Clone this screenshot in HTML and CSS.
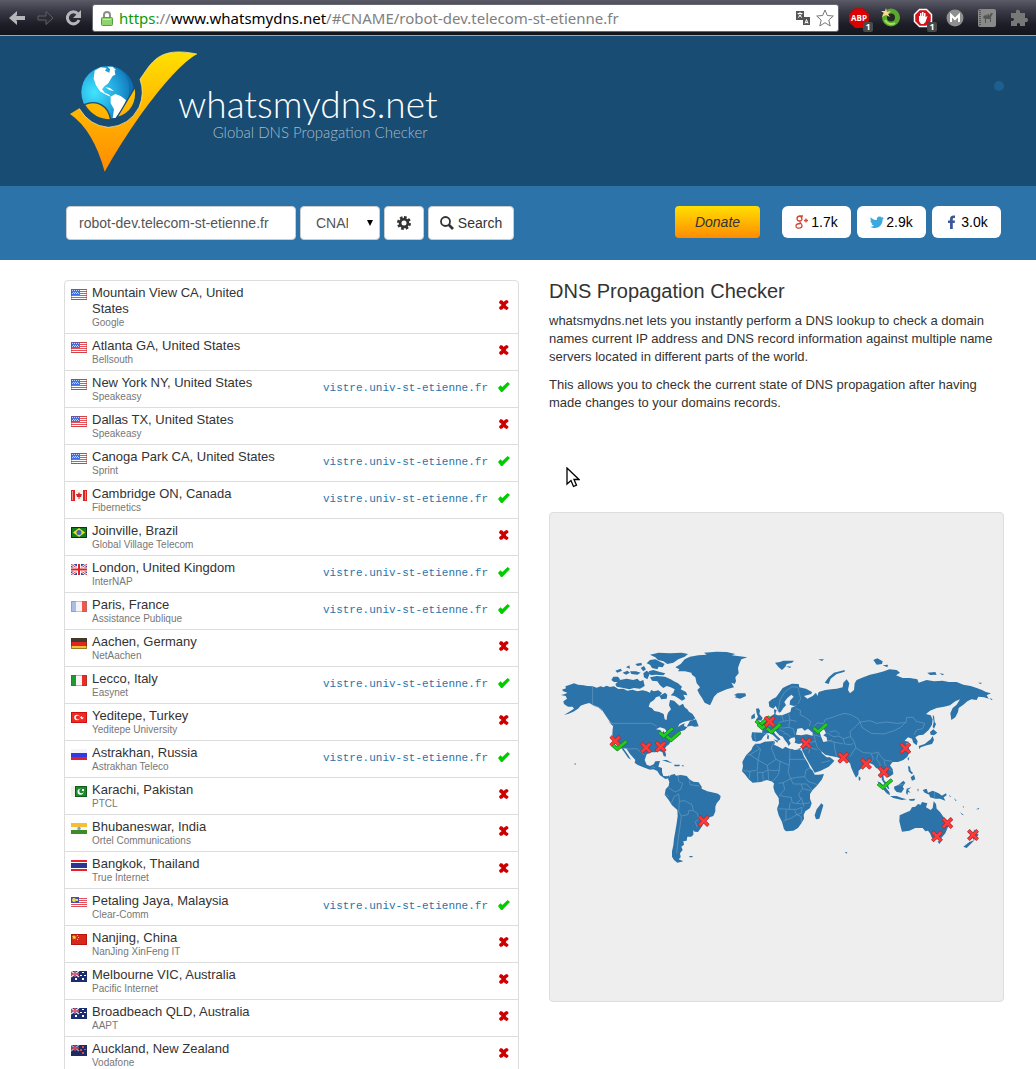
FILE: index.html
```html
<!DOCTYPE html>
<html lang="en">
<head>
<meta charset="utf-8">
<title>whatsmydns.net - Global DNS Propagation Checker</title>
<link rel="stylesheet" href="styles.css">
</head>
<body>
<svg class="sprite" aria-hidden="true">
  <defs>
    <symbol id="ok" viewBox="0 0 36 30"><path d="M0 18 7 10 13 15 29 0 36 6 13 30 9 30Z"/></symbol>
    <symbol id="no" viewBox="0 0 36 30"><path d="M3 6 8 0 14 2 17 6 21 2 26 0 31 3 31 8 26 11 23 15 26 19 31 22 31 26 26 30 21 28 17 24 14 28 8 30 3 25 4 21 11 15 4 10Z"/></symbol>
    <symbol id="us" viewBox="0 0 16 11"><path fill="#fff" d="M0 0h16v11H0z"/><path stroke="#e8505a" d="M0 .5h16M0 2.500h16M0 4.500h16M0 6.500h16M0 8.500h16M0 10.500h16"/><path fill="#3f6fe0" d="M0 0h9v6H0z"/><path stroke="#c3d3ff" stroke-dasharray="1 1" d="M1 1.500h7M2 3.500h6M1 4.500h7"/><path fill="none" stroke="#a33" stroke-opacity=".45" d="M.5 .5h15v10H.5z"/></symbol>
    <symbol id="ca" viewBox="0 0 16 11"><path fill="#f4f4f4" d="M0 0h16v11H0z"/><path fill="#d22" d="M0 0h4v11H0zM12 0h4v11h-4zM8 2l1 2 2 0-1 3H8.500v2h-1V7H6L5 4l2 0z"/><path stroke="#fff" stroke-opacity=".5" d="M1.500 1v9M14.500 1v9"/></symbol>
    <symbol id="br" viewBox="0 0 16 11"><path fill="#14801c" d="M0 0h16v11H0z"/><path fill="#f2df2a" d="M8 1l6 4.500-6 4.500-6-4.500z"/><circle cx="8" cy="5.500" r="2.500" fill="#3a66c8"/><path fill="none" stroke="#04380a" d="M.5 .5h15v10H.5z"/></symbol>
    <symbol id="gb" viewBox="0 0 16 11"><path fill="#2f4a9c" d="M0 0h16v11H0z"/><path stroke="#fff" stroke-width="2.500" d="M0 0l16 11M16 0L0 11"/><path stroke="#d33" d="M0 0l16 11M16 0L0 11"/><path stroke="#fff" stroke-width="4" d="M8 0v11M0 5.500h16"/><path stroke="#e0222c" stroke-width="2" d="M8 0v11M0 5.500h16"/></symbol>
    <symbol id="fr" viewBox="0 0 16 11"><path fill="#f5f5f8" d="M0 0h16v11H0z"/><path fill="#a9bde6" d="M0 0h5v11H0z"/><path fill="#f0584c" d="M11 0h5v11h-5z"/><path fill="none" stroke="#777" stroke-opacity=".4" d="M.5 .5h15v10H.5z"/></symbol>
    <symbol id="de" viewBox="0 0 16 11"><path fill="#3b3b36" d="M0 0h16v4H0z"/><path fill="#e3261c" d="M0 4h16v4H0z"/><path fill="#f0c43a" d="M0 8h16v3H0z"/><path fill="none" stroke="#4a3010" stroke-opacity=".5" d="M.5 .5h15v10H.5z"/></symbol>
    <symbol id="it" viewBox="0 0 16 11"><path fill="#f5f5f5" d="M0 0h16v11H0z"/><path fill="#1f9a30" d="M0 0h5v11H0z"/><path fill="#ec2b24" d="M11 0h5v11h-5z"/><path fill="none" stroke="#444" stroke-opacity=".35" d="M.5 .5h15v10H.5z"/></symbol>
    <symbol id="tr" viewBox="0 0 16 11"><path fill="#ee2a24" d="M0 0h16v11H0z"/><circle cx="6" cy="5.500" r="2.800" fill="#fff"/><circle cx="7" cy="5.500" r="2.100" fill="#ee2a24"/><path fill="#fff" d="M10.500 4l1 1.500 1.500 0-2 2-2-2z"/><path fill="none" stroke="#b00" stroke-opacity=".6" d="M.5 .5h15v10H.5z"/></symbol>
    <symbol id="ru" viewBox="0 0 16 11"><path fill="#f3f3f8" d="M0 0h16v4H0z"/><path fill="#3038e8" d="M0 4h16v4H0z"/><path fill="#e0202a" d="M0 8h16v3H0z"/></symbol>
    <symbol id="pk" viewBox="0 0 16 11"><path fill="#eef2ee" d="M0 0h4v11H0z"/><path fill="#1d8a2c" d="M4 0h12v11H4z"/><circle cx="9.500" cy="5.800" r="3" fill="#fff"/><circle cx="10.500" cy="5" r="2.300" fill="#1d8a2c"/><path fill="#fff" d="M11 3h2v2h-2z"/><path fill="none" stroke="#053a0c" stroke-opacity=".6" d="M4.500 .5h11v10h-11z"/></symbol>
    <symbol id="in" viewBox="0 0 16 11"><path fill="#f3c034" d="M0 0h16v4H0z"/><path fill="#f7f7f7" d="M0 4h16v3H0z"/><path fill="#3c8c28" d="M0 7h16v4H0z"/><circle cx="8" cy="5.500" r="1.700" fill="#8a9cc8"/></symbol>
    <symbol id="th" viewBox="0 0 16 11"><path fill="#e8202a" d="M0 0h16v11H0z"/><path fill="#fff" d="M0 2h16v7H0z"/><path fill="#2c3494" d="M0 3h16v5H0z"/></symbol>
    <symbol id="my" viewBox="0 0 16 11"><path fill="#fff" d="M0 0h16v11H0z"/><path stroke="#e0505a" d="M0 1.500h16M0 3.500h16M0 5.500h16M0 7.500h16M0 9.500h16"/><path fill="#4450b4" d="M0 0h8v6H0z"/><circle cx="3" cy="3" r="2" fill="#f0dc50"/><path fill="#f0dc50" d="M5 2h2v2H5z"/></symbol>
    <symbol id="cn" viewBox="0 0 16 11"><path fill="#d8281c" d="M0 0h16v11H0z"/><path fill="#f6c832" d="M3 1l1 1.500 1.500 0-1 1.500 0 1.500L3 4.500 1.500 5l.5-1.500L1 2h1.500zM6 1h1v1H6zM7 3h1v1H7zM6 5h1v1H6z"/><path fill="none" stroke="#900" stroke-opacity=".5" d="M.5 .5h15v10H.5z"/></symbol>
    <symbol id="au" viewBox="0 0 16 11"><path fill="#1c2c70" d="M0 0h16v11H0z"/><path stroke="#dcdcf0" stroke-width="1.500" d="M0 0l8 6M8 0L0 6"/><path stroke="#e25a66" stroke-width="1.500" d="M4 0v6M0 3h8"/><path fill="#fff" d="M4 7h2v2H4zM11 1h2v1h-2zM13 4h2v1h-2zM9 4h2v1H9zM11 7h2v2h-2z"/></symbol>
    <symbol id="nz" viewBox="0 0 16 11"><path fill="#1e2a60" d="M0 0h16v11H0z"/><path stroke="#9aa2cc" stroke-width="1.500" d="M0 0l8 6M8 0L0 6"/><path stroke="#cc4452" stroke-width="1.500" d="M4 0v6M0 3h8"/><path fill="#d84a54" d="M11 1h2v2h-2zM13 4h2v1h-2zM9 4h2v2H9zM11 7h2v2h-2z"/></symbol>
    <symbol id="pin-no" viewBox="-18 -18 36 36"><path fill="none" stroke="#a8282c" stroke-width="11" d="M-14-14 14 14M14-14-14 14"/><path fill="none" stroke="#ff3a3a" stroke-width="8" d="M-13-13 13 13M13-13-13 13"/></symbol>
    <symbol id="pin-ok" viewBox="-24 -18 48 36"><path fill="none" stroke="#178018" stroke-width="11" d="M-21-2-7 10 21-14"/><path fill="none" stroke="#22cc22" stroke-width="8" d="M-20-1-7 10 20-13"/></symbol>
  </defs>
</svg>

<nav class="chrome" aria-label="Browser toolbar">
  <button class="tool" aria-label="Back"><svg viewBox="0 0 18 18"><path fill="#b4b6b9" d="M9 2v4L8 7h9v4H8l1 1v4L1 9z"/></svg></button>
  <button class="tool" aria-label="Forward"><svg viewBox="0 0 18 18"><path fill="#2b2d35" stroke="#5d6068" d="M10 2.500V7H2v4h8v4.500L17 9z"/></svg></button>
  <button class="tool" aria-label="Reload"><svg viewBox="0 0 18 18"><path fill="none" stroke="#b4b6b9" stroke-width="3" d="M14 5a6 6 0 1 0 1 6"/><path fill="#b4b6b9" d="M17 1v8H9z"/></svg></button>
  <div class="address">
    <svg class="lock" viewBox="0 0 12 16"><path fill="none" stroke="#8b8f8b" stroke-width="2" d="M3 8V5a3 3 0 0 1 6 0v3"/><rect x=".5" y="7.500" width="11" height="8" rx="1" fill="#8fd36c" stroke="#5b9b43"/><path stroke="#c4ecac" d="M2 9.500h8"/></svg>
    <span class="url"><span class="scheme">https</span>://<span class="host">www.whatsmydns.net</span>/#CNAME/robot-dev.telecom-st-etienne.fr</span>
    <svg class="translate" viewBox="0 0 14 14"><path fill="#555" d="M0 0h8v9H0zM7 6h7v8H7z"/><path fill="none" stroke="#fff" d="M1.500 2.500h5M4 1v1M2 6.500l3.500-3M2.500 3.500l3.500 3M9 12.500l1.500-4 1.500 4M9.500 11.500h2"/></svg>
    <svg class="star" viewBox="0 0 18 18"><path fill="#fff" stroke="#777" d="M9 1l2.300 5.500 6 .5-4.500 4 1.400 6L9 13.700 3.800 17l1.400-6L.7 7l6-.5z"/></svg>
  </div>
  <div class="extensions">
    <button class="ext" aria-label="Adblock Plus"><svg viewBox="0 0 20 20"><path fill="#d00" stroke="#a11" d="M6 .5h8L19.500 6v8L14 19.500H6L.5 14V6z"/></svg><b class="abp">ABP</b><span class="count">1</span></button>
    <button class="ext" aria-label="Green orb"><svg viewBox="0 0 20 20"><circle cx="10" cy="9.500" r="6.500" fill="#222b22" stroke="#5aa82c" stroke-width="5"/><path fill="none" stroke="#a4e05a" stroke-width="2" d="M4 12a7 7 0 0 0 10 3"/><path fill="#ffd890" d="M5 0l1 4 4-1-3 3 2 3-4-2-4 2 2-4-3-2h4z"/></svg></button>
    <button class="ext" aria-label="AdBlock"><svg viewBox="0 0 20 20"><path fill="#d3121c" stroke="#fff" stroke-width="1.500" d="M6.500 1.500h7l5 5v7l-5 5h-7l-5-5v-7z"/><path fill="#fff" d="M6 8h1V5h1.500v3H9V4h1.500v4h.5V5h1.500v4l2-1-2 6-2 2H8l-2-3z"/></svg><span class="count">1</span></button>
    <button class="ext" aria-label="Mail"><svg viewBox="0 0 20 20"><circle cx="10" cy="10" r="8.500" fill="#8f8f8f"/><path fill="none" stroke="#fff" stroke-width="2" d="M6 14V7l4 4 4-4v7"/></svg></button>
    <button class="ext" aria-label="Perldoc"><svg viewBox="0 0 20 20"><rect x="1" y="1" width="18" height="18" rx="2" fill="#8a8a8a"/><path stroke="#555" stroke-width="2" stroke-dasharray="1 1" d="M3 2v16"/><path fill="#555" d="M6 10q1-4 2-2 1-3 2 0l1-2q1-1 1 2l2-3h2l-2 4v5h-1v-3h-4v4H8v-4z"/></svg></button>
    <button class="ext" aria-label="Extensions"><svg viewBox="0 0 20 20"><path fill="#777" d="M2 5h5V3q1-3 4 0v2h5v5h2q2 2 0 4h-2v4h-5v-2q-2-2-3 0v2H2v-5h2q2-2 0-3H2z"/></svg></button>
  </div>
</nav>

<div class="page">
  <header class="masthead">
    <a class="brand" href="#">
      <svg class="logo" viewBox="0 0 420 435" aria-hidden="true">
        <defs>
          <linearGradient id="gold" gradientUnits="userSpaceOnUse" x1="0" y1="35" x2="0" y2="395"><stop offset="0" stop-color="#ffe000"/><stop offset="1" stop-color="#ff8a00"/></linearGradient>
          <radialGradient id="sea" cx=".25" cy=".5" r=".75"><stop offset="0" stop-color="#42e4ff"/><stop offset=".6" stop-color="#20a4dc"/><stop offset="1" stop-color="#1070b4"/></radialGradient>
        </defs>
        <circle cx="143" cy="157" r="79" fill="url(#sea)"/>
        <path fill="#0e68ac" opacity=".6" d="M170 83q55 30 30 110l-20 35q42-25 42-75-4-50-52-70z"/>
        <path fill="#fff" d="M104 92 122 82 140 84 135 92 148 98 150 88 164 92 166 104 158 108 152 118 145 130 134 138 126 148 134 158 148 164 152 170 138 164 120 154 108 136 101 116ZM142 80 158 80 168 90 158 94ZM136 142 150 144 162 154 148 150ZM152 170 166 162 182 168 198 180 192 200 178 218 166 234 158 234 162 208 152 190Z"/>
        <path fill="url(#gold)" stroke="#184c72" stroke-width="4" d="M73 194C110 178 146 196 152 240 120 240 92 226 73 194ZM170 234 226 140Q236 214 170 234Z"/>
        <path fill="url(#gold)" d="M30 222 58 205Q88 257 145 262 208 258 237 202 255 160 240 118C276 66 296 18 411 42Q350 76 242 224 180 312 134 395 100 270 30 222Z"/>
        <path fill="none" stroke="#fff3b0" stroke-width="2" d="M58 206Q88 257 145 262 208 258 237 202 255 160 240 118C276 66 296 18 411 42"/>
      </svg>
      <span class="words"><span class="name">whatsmydns.net</span><span class="tagline">Global DNS Propagation Checker</span></span>
    </a>
    <span class="dot"></span>
  </header>

  <div class="bar">
    <form class="lookup">
      <input class="field domain" type="text" aria-label="Domain name" value="robot-dev.telecom-st-etienne.fr">
      <span class="pick"><select class="field type" aria-label="Record type"><option>CNAME</option><option>A</option><option>MX</option></select></span>
      <button class="field gear" type="button" aria-label="Settings"><svg viewBox="0 0 14 14"><path fill="none" stroke="#333" stroke-width="3" stroke-dasharray="2.500 1.820" d="M7 1.500a5.500 5.500 0 1 1-.01 0"/><circle cx="7" cy="7" r="3.900" fill="none" stroke="#333" stroke-width="2.800"/></svg></button>
      <button class="field search" type="button"><svg viewBox="0 0 14 14"><circle cx="5.500" cy="5.500" r="4.500" fill="none" stroke="#333" stroke-width="1.800"/><path stroke="#333" stroke-width="2.600" d="M8.500 8.500l4.500 4.500"/></svg>Search</button>
    </form>
    <div class="social">
      <button class="donate" type="button">Donate</button>
      <a class="share" href="#"><svg viewBox="0 0 14 14"><path fill="none" stroke="#d0483c" stroke-width="1.300" d="M8 1H4.500C1 1.500 1.500 6 4.500 6 8 6 7.500 1.500 4.500 1M5 6c-1 2 2 2 2 4.500C7 14 1 14 1 11c0-2 2-2.500 4.500-2.500M9 5.500h4M11 3.500v4"/></svg>1.7k</a>
      <a class="share" href="#"><svg viewBox="0 0 14 14"><path fill="#3ba9e0" d="M14 3l-1.400 1.500C12.500 10 9 13 5 13c-2 0-3.500-.4-5-1.300 1.500.1 3-.3 4-1.200-1.200 0-2.200-.8-2.600-2h1.200C1.200 8.100.4 7 .4 5.600l1.200.4C.4 5 .1 3.500.8 2.200 2.200 4 4.300 5 6.800 5.100 6.300 3 7.800 1.500 9.600 1.500c.8 0 1.600.3 2.100.9l1.800-.7-1.200 1.600z"/></svg>2.9k</a>
      <a class="share" href="#"><svg viewBox="0 0 14 14"><path fill="#3b5998" d="M5 14V8H3V5.500h2V4q0-3.500 3.500-3.500H10V3H9Q7.800 3 7.800 4v1.500H10L9.700 8H7.800v6z"/></svg>3.0k</a>
    </div>
  </div>

  <main class="content">
    <table class="results">
      <colgroup><col class="c-flag"><col class="c-place"><col><col class="c-state"></colgroup>
      <tbody>
        <tr><td class="flag"><svg><use href="#us"/></svg></td><td>Mountain View CA, United States<small>Google</small></td><td class="value"></td><td class="state no"><svg><use href="#no"/></svg></td></tr>
        <tr><td class="flag"><svg><use href="#us"/></svg></td><td>Atlanta GA, United States<small>Bellsouth</small></td><td class="value"></td><td class="state no"><svg><use href="#no"/></svg></td></tr>
        <tr><td class="flag"><svg><use href="#us"/></svg></td><td>New York NY, United States<small>Speakeasy</small></td><td class="value">vistre.univ-st-etienne.fr</td><td class="state ok"><svg><use href="#ok"/></svg></td></tr>
        <tr><td class="flag"><svg><use href="#us"/></svg></td><td>Dallas TX, United States<small>Speakeasy</small></td><td class="value"></td><td class="state no"><svg><use href="#no"/></svg></td></tr>
        <tr><td class="flag"><svg><use href="#us"/></svg></td><td>Canoga Park CA, United States<small>Sprint</small></td><td class="value">vistre.univ-st-etienne.fr</td><td class="state ok"><svg><use href="#ok"/></svg></td></tr>
        <tr><td class="flag"><svg><use href="#ca"/></svg></td><td>Cambridge ON, Canada<small>Fibernetics</small></td><td class="value">vistre.univ-st-etienne.fr</td><td class="state ok"><svg><use href="#ok"/></svg></td></tr>
        <tr><td class="flag"><svg><use href="#br"/></svg></td><td>Joinville, Brazil<small>Global Village Telecom</small></td><td class="value"></td><td class="state no"><svg><use href="#no"/></svg></td></tr>
        <tr><td class="flag"><svg><use href="#gb"/></svg></td><td>London, United Kingdom<small>InterNAP</small></td><td class="value">vistre.univ-st-etienne.fr</td><td class="state ok"><svg><use href="#ok"/></svg></td></tr>
        <tr><td class="flag"><svg><use href="#fr"/></svg></td><td>Paris, France<small>Assistance Publique</small></td><td class="value">vistre.univ-st-etienne.fr</td><td class="state ok"><svg><use href="#ok"/></svg></td></tr>
        <tr><td class="flag"><svg><use href="#de"/></svg></td><td>Aachen, Germany<small>NetAachen</small></td><td class="value"></td><td class="state no"><svg><use href="#no"/></svg></td></tr>
        <tr><td class="flag"><svg><use href="#it"/></svg></td><td>Lecco, Italy<small>Easynet</small></td><td class="value">vistre.univ-st-etienne.fr</td><td class="state ok"><svg><use href="#ok"/></svg></td></tr>
        <tr><td class="flag"><svg><use href="#tr"/></svg></td><td>Yeditepe, Turkey<small>Yeditepe University</small></td><td class="value"></td><td class="state no"><svg><use href="#no"/></svg></td></tr>
        <tr><td class="flag"><svg><use href="#ru"/></svg></td><td>Astrakhan, Russia<small>Astrakhan Teleco</small></td><td class="value">vistre.univ-st-etienne.fr</td><td class="state ok"><svg><use href="#ok"/></svg></td></tr>
        <tr><td class="flag"><svg><use href="#pk"/></svg></td><td>Karachi, Pakistan<small>PTCL</small></td><td class="value"></td><td class="state no"><svg><use href="#no"/></svg></td></tr>
        <tr><td class="flag"><svg><use href="#in"/></svg></td><td>Bhubaneswar, India<small>Ortel Communications</small></td><td class="value"></td><td class="state no"><svg><use href="#no"/></svg></td></tr>
        <tr><td class="flag"><svg><use href="#th"/></svg></td><td>Bangkok, Thailand<small>True Internet</small></td><td class="value"></td><td class="state no"><svg><use href="#no"/></svg></td></tr>
        <tr><td class="flag"><svg><use href="#my"/></svg></td><td>Petaling Jaya, Malaysia<small>Clear-Comm</small></td><td class="value">vistre.univ-st-etienne.fr</td><td class="state ok"><svg><use href="#ok"/></svg></td></tr>
        <tr><td class="flag"><svg><use href="#cn"/></svg></td><td>Nanjing, China<small>NanJing XinFeng IT</small></td><td class="value"></td><td class="state no"><svg><use href="#no"/></svg></td></tr>
        <tr><td class="flag"><svg><use href="#au"/></svg></td><td>Melbourne VIC, Australia<small>Pacific Internet</small></td><td class="value"></td><td class="state no"><svg><use href="#no"/></svg></td></tr>
        <tr><td class="flag"><svg><use href="#au"/></svg></td><td>Broadbeach QLD, Australia<small>AAPT</small></td><td class="value"></td><td class="state no"><svg><use href="#no"/></svg></td></tr>
        <tr><td class="flag"><svg><use href="#nz"/></svg></td><td>Auckland, New Zealand<small>Vodafone</small></td><td class="value"></td><td class="state no"><svg><use href="#no"/></svg></td></tr>
      </tbody>
    </table>

    <section class="about">
      <h1>DNS Propagation Checker</h1>
      <p>whatsmydns.net lets you instantly perform a DNS lookup to check a domain names current IP address and DNS record information against multiple name servers located in different parts of the world.</p>
      <p>This allows you to check the current state of DNS propagation after having made changes to your domains records.</p>
      <div class="gap"><svg class="cursor" viewBox="0 0 14 22"><path fill="#fff" stroke="#000" stroke-width="1.300" d="M1 1v16l4-3.500 2.500 6 3-1.300L8 12.500h5z"/></svg></div>
      <div class="map">
        <svg viewBox="0 -381 1359 1464" role="img" aria-label="World map of DNS servers">
          <g class="land">
            <!-- North America -->
            <path d="M33 165 45 162 52 158 40 154 36 149 48 145 46 139 60 134 72 130 84 134 100 136 112 138 128 139 140 143 152 139 160 142 170 137 180 141 192 139 205 147 220 146 232 152 248 149 262 154 278 151 290 154 300 158 303 150 312 154 325 151 336 159 329 168 318 172 312 180 300 188 296 200 306 205 313 213 328 216 341 222 344 238 350 240 351 228 354 218 363 208 357 196 360 180 372 182 380 190 388 197 399 191 404 202 412 208 417 215 427 221 436 235 428 241 414 242 400 246 388 252 384 261 394 254 404 250 402 258 412 262 404 270 392 274 386 282 376 290 370 298 362 304 358 312 348 320 343 330 348 342 347 350 341 348 337 336 326 333 316 337 305 337 290 343 284 360 290 374 300 378 311 373 316 364 330 363 325 380 336 384 336 396 340 408 352 409 358 406 358 414 346 417 338 411 330 406 322 393 310 388 300 389 280 382 262 374 254 368 256 360 240 342 228 324 220 325 234 344 243 359 234 353 224 338 212 322 201 312 193 298 187 284 188 268 190 253 180 245 172 234 164 222 156 210 146 202 128 195 118 189 106 192 92 197 84 206 70 215 56 221 42 225 58 215 72 206 68 200 54 200 42 192 40 184 51 176 47 168Z"/>
            <path d="M420 243 438 238 446 259 434 260 424 257 410 260ZM175 243 192 254 188 258Z"/>
            <path class="water" d="M318 268 330 262 344 266 352 276 346 282 340 272 334 286 328 284 332 270Z"/>
            <!-- Arctic islands -->
            <path d="M184 120 190 110 204 110 210 118 206 126 192 126ZM196 132 210 120 230 116 250 120 262 116 270 124 280 120 284 138 270 146 252 144 238 148 220 144 200 140ZM196 92 212 86 216 92 202 98ZM218 98 232 92 240 98 228 104ZM240 94 258 94 272 98 262 104 244 102ZM228 82 238 76 240 86ZM256 72 274 68 276 76 262 78ZM272 84 282 78 288 88 280 94ZM280 100 290 92 300 100 292 118 282 112ZM290 70 300 60 316 58 332 66 344 72 338 82 326 80 322 88 306 84 300 74ZM296 94 310 90 330 96 346 100 340 106 318 104 302 106ZM300 44 326 38 360 40 395 38 414 42 404 50 385 58 370 68 352 72 340 64 324 60 316 52ZM300 112 320 108 345 110 362 118 372 124 384 130 396 140 392 148 408 156 412 166 400 164 406 176 396 182 384 174 374 168 362 166 370 158 374 148 362 142 350 138 340 144 330 136 322 124 306 122ZM328 168 345 158 352 164 350 176 334 178Z"/>
            <!-- Greenland, Iceland -->
            <path d="M376 82 392 72 404 58 420 50 445 46 470 44 462 38 500 35 530 36 556 42 545 46 592 52 574 58 568 72 564 84 566 100 556 112 558 124 554 132 544 128 552 142 530 148 516 154 502 160 492 170 486 184 480 196 464 188 456 174 448 162 442 150 450 142 440 130 436 112 426 104 424 98 405 94 384 94 388 88ZM552 165 562 160 586 160 588 168 570 176 554 172 560 168Z"/>
            <!-- Caribbean, Pacific dots -->
            <path d="M336 360 350 360 368 370 352 366ZM372 374 390 374 388 379 374 379ZM394 376 401 376 400 380ZM72 370 78 371 76 375ZM418 648 428 648 427 652 419 652Z"/>
            <!-- South America -->
            <path d="M354 416 362 405 374 402 378 407 392 405 410 408 418 418 430 425 446 427 455 440 455 446 472 454 492 458 504 461 512 468 510 478 500 490 496 500 496 514 490 528 472 534 460 542 458 556 450 568 444 576 434 575 430 570 430 584 424 590 412 590 410 602 400 604 402 614 394 620 398 630 390 640 392 652 386 658 400 664 382 668 372 660 366 650 366 634 370 616 372 596 376 574 380 550 383 528 382 510 366 496 356 480 344 464 347 448 356 438 358 426Z"/>
          </g>
          <g class="land" transform="translate(540 0)">
            <!-- Europe and Asia -->
            <path d="M118 200 130 206 137 198 142 208 147 218 153 215 160 204 168 196 163 186 172 174 184 164 191 170 180 182 179 194 192 198 201 196 184 203 181 216 168 221 156 226 142 226 136 222 140 210 132 208 133 222 120 230 108 238 98 242 96 250 82 252 92 260 98 268 96 278 66 277 64 290 68 302 80 305 94 300 100 290 110 280 122 280 132 288 144 300 142 304 152 298 138 285 130 274 136 272 148 286 158 290 164 300 172 310 176 318 182 310 176 300 184 294 194 292 196 300 194 308 206 312 216 310 220 320 216 330 224 346 234 364 246 384 254 398 272 392 296 380 308 368 313 362 300 352 290 352 276 340 273 333 286 344 302 348 322 352 340 360 352 364 360 370 364 384 372 402 378 413 385 404 386 392 400 380 412 372 420 370 430 374 438 384 448 388 452 400 456 420 464 432 474 446 478 448 474 434 462 420 460 406 466 404 476 412 490 402 488 388 480 376 488 366 504 366 520 360 532 350 540 334 534 318 528 312 538 306 524 302 534 292 546 296 550 308 560 316 563 304 556 292 566 286 580 284 596 270 606 254 608 238 602 226 588 222 600 212 620 204 642 200 660 196 676 184 690 178 680 194 668 204 661 220 664 240 676 232 684 216 686 204 700 194 712 184 724 178 740 180 745 170 762 172 776 176 770 166 783 160 768 156 756 150 740 144 722 138 700 134 680 126 656 126 638 122 612 124 590 120 566 128 562 118 540 114 518 114 498 106 510 98 500 90 478 88 462 94 440 100 420 104 400 112 380 120 374 130 372 150 360 160 354 150 358 130 350 118 340 128 338 142 320 146 304 148 286 150 266 156 262 168 258 158 248 168 232 176 222 168 244 162 246 156 228 146 208 142 206 132 186 131 170 138 158 144 148 158 138 172 126 178 116 186Z"/>
            <path class="water" d="M198 284 202 266 216 264 224 272 234 266 248 278 248 287 230 283 214 286ZM268 274 282 268 288 280 280 286 290 292 292 304 280 306 274 292ZM212 456 222 456 221 464 213 464Z"/>
            <!-- Islands of Europe and the Arctic -->
            <path d="M78 206 86 205 90 212 88 222 98 234 94 242 78 240 84 230 80 220ZM64 228 74 220 75 234 64 238ZM135 68 150 66 160 62 192 62 186 68 170 72 166 80 156 90 146 82ZM265 58 282 58 276 63ZM284 128 296 112 312 98 344 90 344 95 320 102 302 116 296 132ZM430 60 442 55 458 64 456 72 440 74ZM458 76 474 74 472 82ZM592 98 616 96 620 104 600 105ZM628 100 642 102 638 106ZM744 128 756 128 752 132ZM778 174 788 178 784 180ZM166 78 184 80 180 84ZM130 298 144 302 142 308ZM176 326 190 328 188 331ZM204 326 214 324 210 330ZM112 286 117 286 116 298 111 296Z"/>
            <!-- Japan, Philippines, Indonesia -->
            <path d="M608 226 612 228 614 246 618 252 612 266 608 260 611 246ZM600 276 610 268 622 278 612 286 602 284ZM608 288 612 300 606 312 590 316 572 322 568 328 566 318 584 312 596 302 602 298ZM532 356 538 350 536 362ZM534 378 540 380 542 392 550 400 544 402 536 394ZM542 412 552 404 556 418 546 422ZM492 440 506 434 520 422 526 428 518 440 522 446 514 458 500 456 493 448ZM442 424 452 428 466 442 478 456 480 466 470 460 456 444ZM480 468 500 468 516 474 530 478 516 480 490 474ZM530 446 544 442 534 450 542 458 534 456 532 466 528 458ZM536 478 556 476 552 482 540 482ZM562 446 566 448 564 456ZM578 450 590 446 594 458 608 452 626 460 640 470 646 482 630 476 616 476 600 472 598 464 584 458ZM634 468 648 460 650 466 638 474ZM386 408 392 414 390 422 386 420ZM656 464 664 470 660 470ZM672 474 680 482 676 482ZM690 516 702 526 696 524ZM738 508 748 503 746 508ZM698 498 702 500 700 504Z"/>
            <!-- Africa -->
            <path d="M76 311 90 311 104 305 132 303 135 308 132 314 146 320 158 327 166 320 178 326 194 330 208 328 216 334 222 350 234 370 240 384 248 392 254 404 266 404 282 402 276 418 262 436 248 450 240 462 240 476 245 490 240 504 226 514 221 524 222 536 214 550 204 564 190 572 168 574 162 568 156 546 146 526 141 506 147 490 146 474 134 456 130 442 132 430 124 424 110 420 92 426 68 428 56 418 44 402 36 394 39 378 37 366 48 346 64 330 68 320Z"/>
            <path d="M274 490 280 496 274 516 268 536 258 538 254 526 260 508Z"/>
            <!-- Australia and New Zealand -->
            <path d="M509 526 524 519 540 512 546 502 556 500 564 492 572 494 576 486 592 490 588 502 602 510 608 504 611 484 618 492 620 506 630 516 640 530 650 542 655 558 646 580 632 596 618 598 606 594 600 580 594 572 586 574 578 564 556 564 538 572 516 575 512 560 508 544ZM622 604 634 604 628 612ZM732 568 740 580 746 584 732 600 728 596ZM718 606 734 600 722 612 710 624 700 620ZM344 636 352 637 350 641Z"/>
          </g>
          <g class="borders">
            <path d="M128 139V195L145 202 156 212M190 250H305L320 258M213 324 240 327 260 326 272 336 284 346M300 388 308 380 316 384M384 408 386 424 398 430 392 448 376 456 356 444M418 418 420 434 448 438M364 490 372 470 386 462 388 484 404 482 426 494 430 512 442 520 446 536 436 546 442 562M388 484 386 514 394 528 414 524 416 512 430 512M394 528 390 560 384 600 380 640M346 462 356 470"/>
          </g>
          <g class="borders" transform="translate(540 0)">
            <path d="M144 214 150 180 164 156 186 140 204 142 208 160 212 176 204 192M196 204 212 212 210 224 226 232 242 244 238 258M176 222 180 240 200 244M156 226 160 244 146 248 138 262M120 234 124 250 116 262 122 276M160 244 180 240 176 262 190 266 194 284M138 262 158 264 176 262M160 280 172 282 182 292M96 278 114 284M74 280 76 302M148 270 164 276"/>
            <path d="M250 262 262 248 280 252 286 238 308 232 322 226 344 220 362 224 384 236 390 246 420 242 440 250 470 246 500 250 528 248 530 232 550 232 558 244 584 250 578 266 560 270 552 284M390 246 396 262 424 280 462 282 492 272 512 262 524 250M390 246 374 262 360 274 362 290 340 296 326 288 310 290 290 278M362 290 372 304 378 324 400 338 430 340 444 336 452 348 462 360 474 362 486 364M378 324 372 330 360 350M340 296 344 312 362 314 370 310M290 300 312 306 340 312M312 306 314 326 320 350M292 304 306 300M252 286 256 304 262 322 274 334M228 308 246 306 256 304M222 328 240 322 262 330M240 322 236 340M274 368 300 362M250 284 272 290M424 342 430 356 424 366M444 340 440 358 450 372 452 396M462 362 466 376 478 386 486 394M466 388 480 388M298 276 318 272 330 284M504 436 522 432M614 456V474"/>
            <path d="M76 312 90 326 60 344 48 346M60 344 84 360 112 376 138 358 132 344 124 324 132 304M92 326 84 360M138 358 150 364 178 376 180 328M178 358H226M84 360 82 390 60 394 40 392M112 376 114 390 98 398 82 396M114 390 134 392 148 390 150 364M148 390 146 402 134 418 126 424M178 376 174 396 182 416 200 412 224 410 228 390 240 384M224 410 234 424 262 434M182 416 160 428 146 430M160 428 164 448 148 466M182 416 190 432 214 432 218 446 206 462 212 478 200 490 186 488 184 472 166 470 148 466M200 490 214 492 240 488M180 488 178 508 142 506M178 508 200 508 216 502 214 520 200 524 194 510M168 510 168 540 160 544M168 540 184 534 200 524M200 524 214 530 214 550M218 446 242 452M214 432 230 432 246 450M60 394 58 416M82 396 84 426M98 398 100 424M114 392 116 420M214 472 222 500"/>
          </g>
          <g>
            <use href="#pin-no" x="178" y="285" width="36" height="36"/>
            <use href="#pin-ok" x="185" y="299" width="48" height="36"/>
            <use href="#pin-ok" x="324" y="260" width="48" height="36"/>
            <use href="#pin-ok" x="346" y="272" width="48" height="36"/>
            <use href="#pin-no" x="270" y="305" width="36" height="36"/>
            <use href="#pin-no" x="314" y="302" width="36" height="36"/>
            <use href="#pin-no" x="443" y="525" width="36" height="36"/>
            <use href="#pin-ok" x="614" y="226" width="48" height="36"/>
            <use href="#pin-ok" x="620" y="236" width="48" height="36"/>
            <use href="#pin-ok" x="647" y="248" width="48" height="36"/>
            <use href="#pin-no" x="641" y="227" width="36" height="36"/>
            <use href="#pin-no" x="750" y="292" width="36" height="36"/>
            <use href="#pin-ok" x="787" y="247" width="48" height="36"/>
            <use href="#pin-no" x="862" y="335" width="36" height="36"/>
            <use href="#pin-no" x="930" y="353" width="36" height="36"/>
            <use href="#pin-no" x="983" y="378" width="36" height="36"/>
            <use href="#pin-ok" x="981" y="415" width="48" height="36"/>
            <use href="#pin-no" x="1048" y="307" width="36" height="36"/>
            <use href="#pin-no" x="1174" y="531" width="36" height="36"/>
            <use href="#pin-no" x="1143" y="571" width="36" height="36"/>
            <use href="#pin-no" x="1251" y="567" width="36" height="36"/>
          </g>
        </svg>
      </div>
    </section>
  </main>
</div>
</body>
</html>
```
FILE: styles.css
```css
* { box-sizing: border-box; }

body {
  margin: 0;
  height: 100vh;
  display: flex;
  flex-direction: column;
  overflow: hidden;
  background: #fff;
  color: #333;
  font: 13px/18px "Liberation Sans", Arial, sans-serif;
}

button { font: inherit; color: inherit; border: 0; padding: 0; background: none; }
svg { display: block; }
.sprite { width: 0; height: 0; position: absolute; }

/* Browser toolbar */
.chrome {
  flex: none;
  display: flex;
  align-items: center;
  gap: 10px;
  height: 36px;
  padding: 0 7px 0 8px;
  background: linear-gradient(#5a5b66, #3a3b46 30%, #1c1d26 70%, #15161c);
  border-bottom: 1px solid #a0a6aa;
}
.tool, .tool svg { width: 18px; height: 18px; }
.address {
  flex: 1;
  display: flex;
  align-items: center;
  gap: 6px;
  height: 28px;
  min-width: 0;
  padding: 0 4px 0 8px;
  background: #fff;
  border: 1px solid #666973;
  border-radius: 3px;
}
.url {
  flex: 1;
  color: #808080;
  font: 15px/24px "Noto Sans", sans-serif;
  white-space: nowrap;
  overflow: hidden;
}
.scheme { color: #0a9a0a; }
.host { color: #000; }
.lock { width: 12px; height: 16px; }
.translate { width: 14px; height: 14px; }
.star { width: 18px; height: 18px; }
.extensions { display: flex; gap: 12px; }
.ext { position: relative; width: 20px; height: 20px; }
.ext svg { width: 20px; height: 20px; }
.abp {
  position: absolute;
  inset: 0;
  color: #fff;
  font: bold 8px/20px "Open Sans", sans-serif;
  text-align: center;
}
.count {
  position: absolute;
  right: -4px;
  bottom: -4px;
  width: 10px;
  height: 10px;
  border-radius: 2px;
  background: #4a4a4a;
  color: #fff;
  font: bold 9px/10px "Open Sans", sans-serif;
  text-align: center;
}

.page { flex: 1; min-height: 0; overflow: hidden; }

/* Header */
.masthead {
  display: flex;
  justify-content: space-between;
  align-items: flex-start;
  height: 150px;
  padding: 4px 32px 0 60px;
  background: #184c72;
}
.brand { display: flex; color: #fff; text-decoration: none; }
.logo { width: 140px; height: 145px; }
.words {
  display: flex;
  flex-direction: column;
  align-items: flex-end;
  margin-left: -22px;
  padding-top: 44px;
  font-family: Lato, sans-serif;
  font-weight: 300;
}
.name { font-size: 37px; line-height: 40px; }
.tagline { padding-right: 10px; color: #a5bccb; font-size: 15px; line-height: 16px; }
.dot { width: 10px; height: 10px; margin-top: 41px; border-radius: 50%; background: #1f5f8f; }

/* Search bar */
.bar {
  display: flex;
  justify-content: space-between;
  height: 74px;
  padding: 20px 35px 20px 66px;
  background: #2b73a8;
}
.lookup, .social { display: flex; align-items: flex-start; }
.lookup { gap: 4px; }
.field {
  height: 34px;
  border: 1px solid #ccc;
  border-radius: 4px;
  background: #fff;
  color: #333;
  font: 14px/20px "Liberation Sans", Arial, sans-serif;
}
.domain { width: 230px; padding: 6px 12px; color: #555; }
.pick { position: relative; }
.pick::after {
  content: "";
  position: absolute;
  right: 7px;
  top: 14px;
  border: 3px solid transparent;
  border-top: 6px solid #000;
  border-bottom: 0;
}
.type { appearance: none; width: 80px; padding: 0 31px 0 15px; color: #555; }
.gear, .search { display: flex; align-items: center; justify-content: center; }
.gear { width: 40px; }
.search { width: 86px; gap: 4px; }
.gear svg, .search svg { width: 14px; height: 14px; }
.social { gap: 6px; }
.donate, .share { height: 32px; border-radius: 4px; font-size: 14px; }
.donate {
  width: 85px;
  margin-right: 16px;
  background: linear-gradient(#ffdf00, #ff8c00);
  font-style: italic;
}
.share {
  display: flex;
  align-items: center;
  justify-content: center;
  gap: 2px;
  width: 69px;
  background: #fff;
  border-radius: 6px;
  color: #000;
  text-decoration: none;
}
.share svg { width: 14px; height: 14px; }

/* Content */
.content {
  display: grid;
  grid-template-columns: 1fr 1fr;
  align-items: start;
  gap: 30px;
  padding: 20px 32px 20px 64px;
}
.results {
  width: 100%;
  table-layout: fixed;
  border: 1px solid #ddd;
  border-radius: 4px;
  border-spacing: 0;
}
.c-flag { width: 27px; }
.c-place { width: 188px; }
.c-state { width: 30px; }
.results td { padding: 4px 0; line-height: 16px; vertical-align: top; }
.results tr + tr td { border-top: 1px solid #ddd; }
.results small { display: block; color: #777; font-size: 10px; line-height: 12px; }
.results .flag { padding: 8px 0 0 6px; }
.flag svg { width: 16px; height: 11px; }
.results .value {
  padding: 6px 0 8px;
  color: #2b73a8;
  font: 11px/16px "Liberation Mono", monospace;
  text-align: right;
  vertical-align: middle;
}
.results .state { padding: 4px 8px 8px 10px; vertical-align: middle; }
.state svg { width: 12px; height: 10px; }
.state.ok { fill: #0c0; }
.state.no { fill: #c00; }

.about h1 { margin: 0 0 10px; font-size: 20px; font-weight: normal; line-height: 22px; }
.about p { margin: 0 0 10px; }
.gap { height: 90px; padding: 45px 0 0 17px; }
.cursor { width: 14px; height: 22px; }
.map { border: 1px solid #ddd; border-radius: 4px; background: #eee; }
.map svg { width: 100%; }
.land { fill: #2b73a8; }
.water { fill: #eee; }
.borders { fill: none; stroke: #6a9dc4; stroke-width: 2; }
```
